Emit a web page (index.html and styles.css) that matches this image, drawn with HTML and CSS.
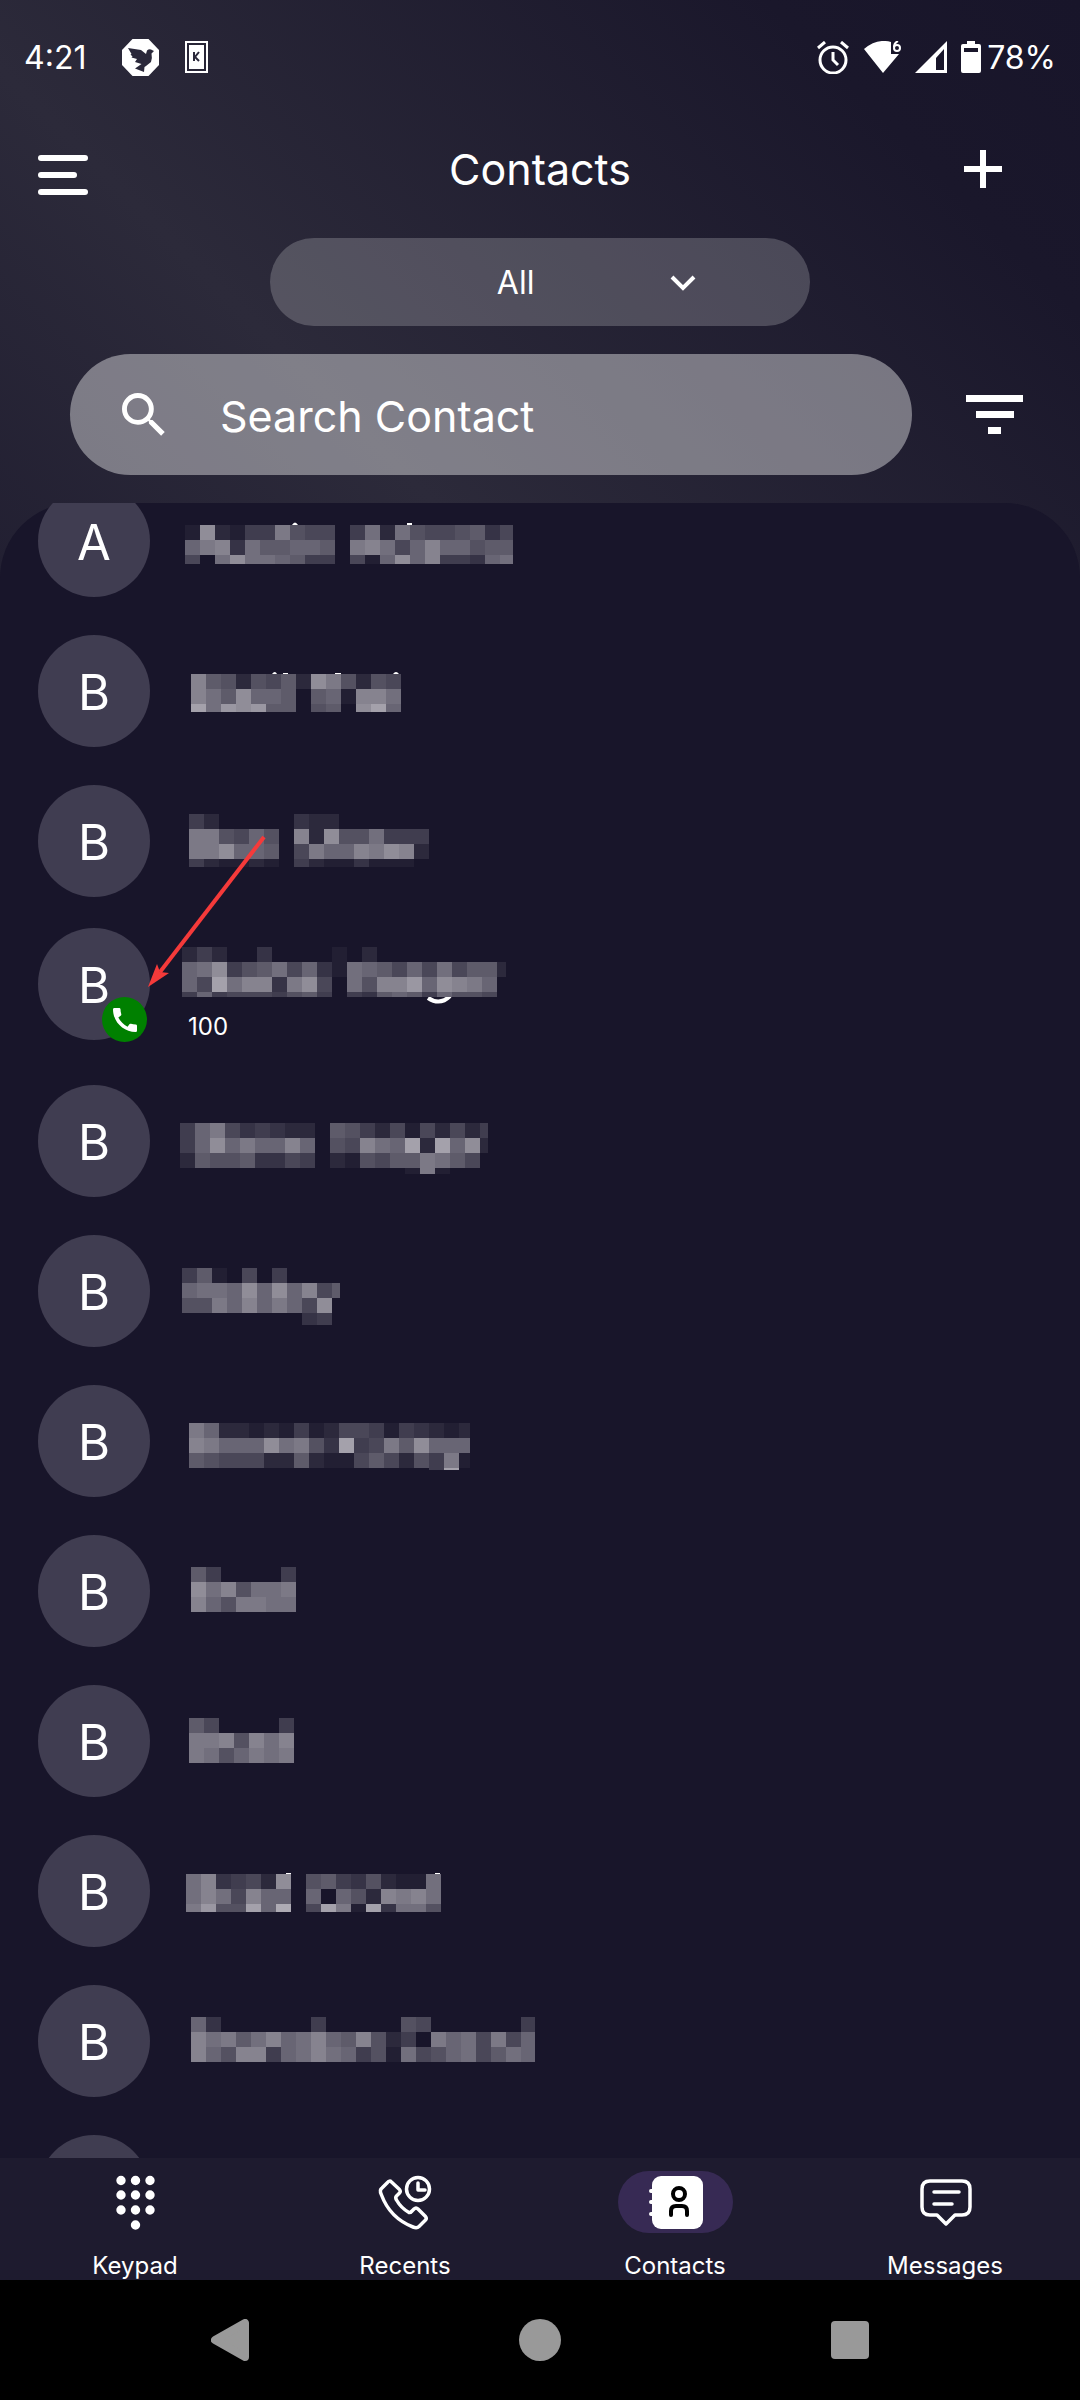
FILE: index.html
```html
<!DOCTYPE html>
<html lang="en">
<head>
    <meta charset="UTF-8">
    <meta name="viewport" content="width=device-width, initial-scale=1.0">
    <title>Contacts</title>
    <link rel="stylesheet" href="styles.css">
</head>
<body>
    <div class="app">
        <div class="status-bar">
            <span class="clock">4:21</span>
            <svg class="icon-dove" width="37" height="37" viewBox="0 0 37 37">
                <path fill="#fff" d="M10.500 0h16L37 11v15L26.500 37h-16L0 26V11z"/>
                <path fill="#2a283a" d="M6 9l13 2 5 4 1-3.500q2-2 4-1l3 1.500-2.500 2.500q1 5-.5 8.500L24 27l-1.500 1-.5 5-9-3.500 6.500-4.500-6.500-2 2-3-5.500-1.500 1-1-2-2 1-.5z"/>
            </svg>
            <svg width="23" height="32" viewBox="0 0 23 32">
                <path fill="none" stroke="#fff" stroke-width="2" d="M1 1h21v30H1z"/>
                <path fill="#fff" d="M4 4h15v24H4z"/>
                <path fill="none" stroke="#2a283a" stroke-width="2" d="M9 11v9M14 11l-4 5 4 4"/>
            </svg>
            <span class="spacer"></span>
            <svg width="32" height="33" viewBox="0 0 32 33" fill="none" stroke="#fff" stroke-width="3">
                <circle cx="16" cy="19" r="13"/>
                <path d="M16 11v8l5 5M1 7l7-6M24 1l7 6"/>
            </svg>
            <svg width="38" height="32" viewBox="-1 0 38 32">
                <path fill="#fff" d="M0 8Q13-3 27 1v12h8L19 32z"/>
                <path fill="none" stroke="#fff" stroke-width="2" d="M34 0q-4 2-4 6"/>
                <circle cx="33" cy="7" r="3" fill="none" stroke="#fff" stroke-width="2"/>
            </svg>
            <svg width="32" height="32" viewBox="0 0 32 32">
                <path fill="#fff" fill-rule="evenodd" d="M32 0v32H0zM29 8v21h-8V17z"/>
            </svg>
            <svg width="20" height="32" viewBox="0 0 20 32">
                <path fill="#fff" fill-rule="evenodd" d="M6 0h8v3h4q2 0 2 2v25q0 2-2 2H2q-2 0-2-2V5q0-2 2-2h4zM3 7v4h14V7z"/>
            </svg>
            <span class="battery">78%</span>
        </div>

        <header class="top-bar">
            <button class="icon-button" aria-label="Menu">
                <svg width="50" height="52" viewBox="0 0 50 52" fill="#fff">
                    <rect y="12" width="50" height="6" rx="3"/>
                    <rect y="29" width="39" height="6" rx="3"/>
                    <rect y="46" width="50" height="6" rx="3"/>
                </svg>
            </button>
            <h1>Contacts</h1>
            <button class="icon-button add" aria-label="Add contact">
                <svg width="38" height="38" viewBox="0 0 38 38" fill="#fff">
                    <path d="M16 0h6v16h16v6H22v16h-6V22H0v-6h16z"/>
                </svg>
            </button>
        </header>

        <div class="group-filter">
            <select aria-label="Contact group">
                <option>All</option>
            </select>
            <svg width="26" height="16" viewBox="0 0 26 16" fill="none" stroke="#fff" stroke-width="4">
                <path d="M2 2l11 11L24 2"/>
            </svg>
        </div>

        <div class="search-row">
            <label class="search-box">
                <svg width="44" height="44" viewBox="3 3 18 18" fill="#fff">
                    <path d="M15.500 14h-.79l-.28-.27A6.471 6.471 0 0 0 16 9.500 6.500 6.500 0 1 0 9.500 16c1.610 0 3.090-.59 4.230-1.570l.27.28v.79l5 4.990L20.490 19l-4.990-5zm-6 0C7.010 14 5 11.990 5 9.500S7.010 5 9.500 5 14 7.010 14 9.500 11.990 14 9.500 14z"/>
                </svg>
                <input type="text" placeholder="Search Contact" aria-label="Search Contact">
            </label>
            <button class="icon-button" aria-label="Sort">
                <svg width="57" height="40" viewBox="0 0 57 40" fill="#fff">
                    <path d="M0 0h57v7H0zM10 16h38v7H10zM22 32h13v7H22z"/>
                </svg>
            </button>
        </div>

        <main class="panel">
            <div class="list-window">
                <ul class="contacts">
                    <li>
                        <span class="avatar">A</span>
                        <svg class="name" data-x="5" data-y="40" data-w="328" data-h="39" data-cells="1c2144a655.49296556735|8ab3977887.ab958b88677|509c998744.518c8b44389"><path d="M112 40q3-5 6 0zM227 38h5v2h-5z"/></svg>
                    </li>
                    <li>
                        <span class="avatar">B</span>
                        <svg class="name" data-x="11" data-y="39" data-w="211" data-h="38" data-cells="b76265 72ca6265|b97c88707 81bb9|e9dcd7706 70ce8"><path d="M92 39q3-4 5 0zM103 38h5v1h-5zM155 38h6v1h-6zM213 39q3-4 6 0z"/></svg>
                    </li>
                    <li>
                        <span class="avatar">B</span>
                        <svg class="name" data-x="9" data-y="29" data-w="240" data-h="53" data-cells="42.....322......|aa6586.b2c669444|aac887.5a88bacb2|421121.42113111."></svg>
                    </li>
                    <li class="on-call">
                        <span class="avatar">B
                            <span class="badge">
                                <svg width="24" height="24" viewBox="3 3 18 18" fill="#fff">
                                    <path d="M20.010 15.380c-1.230 0-2.420-.2-3.530-.56a.977.977 0 0 0-1.010.24l-1.570 1.970c-2.830-1.350-5.480-3.900-6.890-6.830l1.950-1.660c.27-.28.35-.67.24-1.020-.37-1.110-.56-2.300-.56-3.530 0-.54-.45-.99-.99-.99H4.190C3.650 3 3 3.240 3 3.990 3 13.280 10.730 21 20.010 21c.71 0 .99-.63.99-1.180v-3.450c0-.54-.45-.99-.99-.99z"/>
                                </svg>
                            </span>
                        </span>
                        <div class="details">
                            <svg class="name" data-x="2" data-y="19" data-w="324" data-h="50" data-cells="242..3....1.2.........|89c4679583198758595772|85e9bb3ac5096bbd8cba8.|484555467 4.4378748665."><path class="tail" d="M248 70q12 8 22-2"/></svg>
                            <span class="extension">100</span>
                        </div>
                        <svg class="arrow" width="140" height="170" viewBox="0 0 140 170">
                            <path d="M124 7L20 142" fill="none" stroke="#f53a3a" stroke-width="4"/>
                            <path d="M8 157l9-23 3 8 9 1z" fill="#f53a3a"/>
                        </svg>
                    </li>
                    <li>
                        <span class="avatar">B</span>
                        <svg class="name" data-x="0" data-y="38" data-w="308" data-h="51" data-cells="48a534322.7642515252 4|48c8a88b8.65b98e2e8c2|276673354.216577a975.|...............1a1..."></svg>
                    </li>
                    <li>
                        <span class="avatar">B</span>
                        <svg class="name" data-x="2" data-y="33" data-w="158" data-h="57" data-cells="471.5.4....|8998c8c8b57|66a8b8a85c.|........34."></svg>
                    </li>
                    <li>
                        <span class="avatar">B</span>
                        <svg class="name" data-x="9" data-y="38" data-w="281" data-h="47" data-cells="a822121412554143212|ba888c9a63e45a7c888|765552272115752 64a1|................4e."></svg>
                    </li>
                    <li>
                        <span class="avatar">B</span>
                        <svg class="name" data-x="11" data-y="32" data-w="105" data-h="45" data-cells="74....4|c9b699a|b86aa99"></svg>
                    </li>
                    <li>
                        <span class="avatar">B</span>
                        <svg class="name" data-x="9" data-y="33" data-w="105" data-h="45" data-cells="75....4|aab6b9b|a968a9a"></svg>
                    </li>
                    <li>
                        <span class="avatar">B</span>
                        <svg class="name" data-x="6" data-y="39" data-w="255" data-h="38" data-cells="9b3452c.674362119|9b95b88.80862bab9|ad66e8f.5ea1e3996"><path d="M106 38h5v1h-5zM255 38h5v1h-5z"/></svg>
                    </li>
                    <li>
                        <span class="avatar">B</span>
                        <svg class="name" data-x="11" data-y="32" data-w="344" data-h="45" data-cells="83......4.....65......4|b9a79b89b87b6240a895a58|b86bb489b98461956895798"></svg>
                    </li>
                    <li>
                        <span class="avatar"></span>
                    </li>
                </ul>
            </div>
        </main>

        <nav class="tabs">
            <a href="#keypad">
                <svg class="tab-icon" viewBox="0 0 115 62" fill="none" stroke="#fff" stroke-width="9.400" stroke-linecap="round">
                    <path d="M43 9.500h0M57.500 9.500h0M72 9.500h0M43 24h0M57.500 24h0M72 24h0M43 39h0M57.500 39h0M72 39h0M57.500 54h0"/>
                </svg>
                <span>Keypad</span>
            </a>
            <a href="#recents">
                <svg class="tab-icon" viewBox="0 0 115 62" fill="none" stroke="#fff" stroke-width="3.500" stroke-linecap="round" stroke-linejoin="round">
                    <circle cx="70" cy="18" r="11.500"/>
                    <path d="M70 12v7h7"/>
                    <path d="M39.500 11.500Q41.500 9 43.500 11L51.500 18.500Q53 20.300 51.500 22L48.500 25Q47 26.500 48.500 29 53 37 61 41.500 62.300 42 64 40L66 38Q68 36 70 38L77.500 45.500Q79 47.500 77.500 49L71 55.500Q69 57.500 65 56 42 47 33.500 24 31 19 34 17z"/>
                </svg>
                <span>Recents</span>
            </a>
            <a href="#contacts" class="active">
                <svg class="tab-icon" viewBox="0 0 115 62" fill="none" stroke-linecap="round">
                    <path stroke="#fff" stroke-width="4" d="M33 20h4M33 31h4M33 43h4"/>
                    <rect x="34" y="5" width="51" height="53" rx="9" fill="#fff"/>
                    <circle cx="61" cy="23" r="6" stroke="#000" stroke-width="4"/>
                    <path stroke="#000" stroke-width="4" d="M53 44v-4q0-5 5-5h6q5 0 5 5v4"/>
                </svg>
                <span>Contacts</span>
            </a>
            <a href="#messages">
                <svg class="tab-icon" viewBox="0 0 115 62" fill="none" stroke="#fff" stroke-width="3.500" stroke-linecap="round" stroke-linejoin="round">
                    <path d="M42 10h32q8 0 8 8v18q0 8-8 8h-7l-9 9-9-9h-7q-8 0-8-8V18q0-8 8-8z"/>
                    <path d="M46 21h25M46 33h18"/>
                </svg>
                <span>Messages</span>
            </a>
        </nav>

        <div class="system-bar">
            <button class="icon-button" aria-label="Back">
                <svg width="38" height="42" viewBox="0 0 38 42">
                    <path fill="#999" stroke="#999" stroke-width="8" stroke-linejoin="round" d="M34 4v34L4 21z"/>
                </svg>
            </button>
            <button class="icon-button" aria-label="Home">
                <svg width="42" height="42" viewBox="0 0 42 42"><circle cx="21" cy="21" r="21" fill="#999"/></svg>
            </button>
            <button class="icon-button" aria-label="Overview">
                <svg width="38" height="38" viewBox="0 0 38 38"><rect width="38" height="38" rx="4" fill="#999"/></svg>
            </button>
        </div>
    </div>

    <script>
        // Draw each masked name as a mosaic, one hex digit of brightness per cell
        const CELL = 15;

        document.querySelectorAll(".name").forEach(function(svg) {
            const data = svg.dataset;
            const left = Number(data.x);
            const top = Number(data.y);

            data.cells.replace(/ /g, "").split("|").forEach(function(row, r) {
                [...row].forEach(function(level, c) {
                    if (level === ".") return;
                    const v = parseInt(level, 16) * 10;
                    const rect = document.createElementNS("http://www.w3.org/2000/svg", "rect");
                    rect.setAttribute("x", left + c * CELL);
                    rect.setAttribute("y", top + r * CELL);
                    rect.setAttribute("width", Math.max(0, Math.min(CELL, data.w - c * CELL)));
                    rect.setAttribute("height", Math.max(0, Math.min(CELL, data.h - r * CELL)));
                    rect.setAttribute("fill", `rgb(${24 + v}, ${21 + v}, ${Math.round(42 + v * 0.92)})`);
                    svg.appendChild(rect);
                });
            });
        });
    </script>
</body>
</html>
```
FILE: styles.css
```css
* {
    margin: 0;
    padding: 0;
    box-sizing: border-box;
}

body {
    font-family: Inter, "Liberation Sans", sans-serif;
    background-color: #000;
    color: #fff;
}

svg {
    display: block;
    flex-shrink: 0;
}

.app {
    display: flex;
    flex-direction: column;
    height: 100vh;
    background: linear-gradient(225deg, #18152a 0%, #1a172b 9%, #2c2a3a 33%, #18152a 62%);
}

.icon-button {
    background: none;
    border: none;
    cursor: pointer;
}

/* Status bar */
.status-bar {
    display: flex;
    align-items: center;
    gap: 14px;
    height: 114px;
    padding: 0 24px;
    font-size: 32px;
}

.icon-dove {
    margin: 0 12px 0 22px;
}

.spacer {
    flex: 1;
}

.battery {
    margin-left: -8px;
}

/* Title row */
.top-bar {
    display: grid;
    grid-template-columns: 1fr auto 1fr;
    align-items: center;
    height: 110px;
    padding: 0 38px;
}

.top-bar .icon-button {
    justify-self: start;
}

.top-bar .add {
    justify-self: end;
    margin-right: 40px;
}

h1 {
    font-size: 43px;
    font-weight: 400;
}

/* Group drop-down */
.group-filter {
    position: relative;
    width: 50%;
    margin: 14px auto 28px;
}

.group-filter select {
    display: block;
    width: 100%;
    height: 88px;
    padding-left: 42%;
    border: none;
    border-radius: 44px;
    background-color: rgba(255, 255, 255, 0.2);
    color: #fff;
    font: inherit;
    font-size: 32px;
    appearance: none;
}

.group-filter svg {
    position: absolute;
    top: 37px;
    right: 114px;
    pointer-events: none;
}

/* Search */
.search-row {
    display: flex;
    align-items: center;
    gap: 54px;
    padding: 0 57px 0 70px;
    margin-bottom: 28px;
}

.search-box {
    flex: 1;
    min-width: 0;
    display: flex;
    align-items: center;
    gap: 54px;
    height: 121px;
    padding: 0 52px;
    border-radius: 61px;
    background-color: rgba(255, 255, 255, 0.4);
}

.search-box input {
    flex: 1;
    min-width: 0;
    padding-top: 2px;
    border: none;
    outline: none;
    background: none;
    color: #fff;
    font: inherit;
    font-size: 43px;
}

.search-box input::placeholder {
    color: #fff;
    opacity: 1;
}

/* Contact list */
.panel {
    flex: 1;
    min-height: 0;
    border-radius: 75px 75px 0 0;
    background-color: #18152a;
}

.list-window {
    height: 100%;
    overflow: hidden;
}

.contacts {
    margin-top: -37px;
    list-style: none;
}

.contacts li {
    position: relative;
    display: flex;
    gap: 30px;
    height: 150px;
    padding: 19px 38px;
}

.contacts .on-call {
    padding-top: 12px;
}

.avatar {
    position: relative;
    flex-shrink: 0;
    width: 112px;
    height: 112px;
    border-radius: 50%;
    background-color: #403d51;
    font-size: 49px;
    line-height: 116px;
    text-align: center;
}

.badge {
    position: absolute;
    right: 3px;
    bottom: -2px;
    display: grid;
    place-items: center;
    width: 45px;
    height: 45px;
    border-radius: 50%;
    background-color: #008000;
}

.name {
    width: 380px;
    height: 112px;
    fill: #fff;
}

.name .tail {
    fill: none;
    stroke: #fff;
    stroke-width: 4px;
}

.details .name {
    height: 84px;
}

.extension {
    display: block;
    padding-left: 8px;
    font-size: 24px;
    line-height: 30px;
}

.arrow {
    position: absolute;
    top: -86px;
    left: 140px;
}

/* Bottom tabs */
.tabs {
    display: grid;
    grid-template-columns: repeat(4, 1fr);
    padding-top: 13px;
    background-color: #1e1b2f;
}

.tabs a {
    display: flex;
    flex-direction: column;
    align-items: center;
    gap: 19px;
    color: #fff;
    font-size: 24px;
    line-height: 28px;
    text-decoration: none;
}

.tab-icon {
    width: 115px;
    height: 62px;
    border-radius: 31px;
}

.active .tab-icon {
    background-color: #372a54;
}

/* System buttons */
.system-bar {
    display: flex;
    align-items: center;
    justify-content: space-between;
    height: 120px;
    padding: 0 211px;
    background-color: #000;
}
```
